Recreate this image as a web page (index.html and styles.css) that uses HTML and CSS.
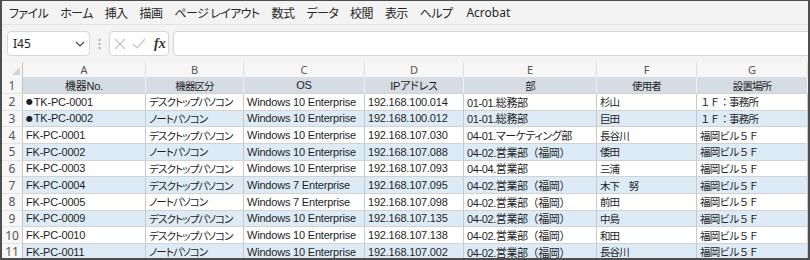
FILE: index.html
```html
<!DOCTYPE html>
<html lang="ja">
<head>
  <meta charset="UTF-8">
  <meta name="viewport" content="width=device-width, initial-scale=1.0">
  <title>機器一覧</title>
  <link rel="stylesheet" href="styles.css">
</head>
<body>
  <div class="window">
    <nav class="menu">
      <span>ファイル</span>
      <span>ホーム</span>
      <span>挿入</span>
      <span>描画</span>
      <span>ページ レイアウト</span>
      <span>数式</span>
      <span>データ</span>
      <span>校閲</span>
      <span>表示</span>
      <span>ヘルプ</span>
      <span class="latin">Acrobat</span>
    </nav>

    <div class="formula-bar">
      <div class="name-box">
        <span>I45</span>
        <svg width="10" height="6" viewBox="0 0 10 6"><path d="M1 1 L5 5 L9 1" fill="none" stroke="#444" stroke-width="1.2"/></svg>
      </div>
      <svg class="grip" width="7" height="14" viewBox="0 0 7 14">
        <circle cx="3.5" cy="3" r="1" fill="#999"/>
        <circle cx="3.5" cy="7" r="1" fill="#999"/>
        <circle cx="3.5" cy="11" r="1" fill="#999"/>
      </svg>
      <div class="fx-box">
        <svg width="12" height="12" viewBox="0 0 12 12"><path d="M1 1 L11 11 M11 1 L1 11" stroke="#c4c4c4" stroke-width="1.2"/></svg>
        <svg width="14" height="12" viewBox="0 0 14 12"><path d="M1 6 L5 10 L13 1" fill="none" stroke="#c4c4c4" stroke-width="1.2"/></svg>
        <span class="fx">fx</span>
      </div>
      <div class="formula-input"></div>
    </div>

    <div class="sheet">
      <div class="col-head">
        <div class="corner"><svg width="8" height="8" viewBox="0 0 8 8"><polygon points="8,0 8,8 0,8" fill="#d4d4d4"/></svg></div>
        <div>A</div><div>B</div><div>C</div><div>D</div><div>E</div><div>F</div><div>G</div>
      </div>

      <div class="row head">
        <div class="num">1</div>
        <div>機器No.</div><div class="jp">機器区分</div><div>OS</div><div>IPアドレス</div><div class="jp">部</div><div class="jp">使用者</div><div class="jp">設置場所</div>
      </div>
      <div class="row">
        <div class="num">2</div>
        <div><span class="dot">●</span>TK-PC-0001</div><div class="jp">デスクトップパソコン</div><div>Windows 10 Enterprise</div><div>192.168.100.014</div><div class="dept">01-01.総務部</div><div class="jp">杉山</div><div class="place">１Ｆ：事務所</div>
      </div>
      <div class="row alt">
        <div class="num">3</div>
        <div><span class="dot">●</span>TK-PC-0002</div><div class="jp">ノートパソコン</div><div>Windows 10 Enterprise</div><div>192.168.100.012</div><div class="dept">01-01.総務部</div><div class="jp">巨田</div><div class="place">１Ｆ：事務所</div>
      </div>
      <div class="row">
        <div class="num">4</div>
        <div>FK-PC-0001</div><div class="jp">デスクトップパソコン</div><div>Windows 10 Enterprise</div><div>192.168.107.030</div><div class="dept">04-01.マーケティング部</div><div class="jp">長谷川</div><div class="place">福岡ビル５Ｆ</div>
      </div>
      <div class="row alt">
        <div class="num">5</div>
        <div>FK-PC-0002</div><div class="jp">ノートパソコン</div><div>Windows 10 Enterprise</div><div>192.168.107.088</div><div class="dept">04-02.営業部<span class="fw">（福岡）</span></div><div class="jp">倭田</div><div class="place">福岡ビル５Ｆ</div>
      </div>
      <div class="row">
        <div class="num">6</div>
        <div>FK-PC-0003</div><div class="jp">デスクトップパソコン</div><div>Windows 10 Enterprise</div><div>192.168.107.093</div><div class="dept">04-04.営業部</div><div class="jp">三浦</div><div class="place">福岡ビル５Ｆ</div>
      </div>
      <div class="row alt">
        <div class="num">7</div>
        <div>FK-PC-0004</div><div class="jp">デスクトップパソコン</div><div>Windows 7 Enterprise</div><div>192.168.107.095</div><div class="dept">04-02.営業部<span class="fw">（福岡）</span></div><div class="jp">木下<span class="fw">　</span>努</div><div class="place">福岡ビル５Ｆ</div>
      </div>
      <div class="row">
        <div class="num">8</div>
        <div>FK-PC-0005</div><div class="jp">ノートパソコン</div><div>Windows 7 Enterprise</div><div>192.168.107.098</div><div class="dept">04-02.営業部<span class="fw">（福岡）</span></div><div class="jp">前田</div><div class="place">福岡ビル５Ｆ</div>
      </div>
      <div class="row alt">
        <div class="num">9</div>
        <div>FK-PC-0009</div><div class="jp">デスクトップパソコン</div><div>Windows 10 Enterprise</div><div>192.168.107.135</div><div class="dept">04-02.営業部<span class="fw">（福岡）</span></div><div class="jp">中島</div><div class="place">福岡ビル５Ｆ</div>
      </div>
      <div class="row">
        <div class="num">10</div>
        <div>FK-PC-0010</div><div class="jp">デスクトップパソコン</div><div>Windows 10 Enterprise</div><div>192.168.107.138</div><div class="dept">04-02.営業部<span class="fw">（福岡）</span></div><div class="jp">和田</div><div class="place">福岡ビル５Ｆ</div>
      </div>
      <div class="row alt">
        <div class="num">11</div>
        <div>FK-PC-0011</div><div class="jp">ノートパソコン</div><div>Windows 10 Enterprise</div><div>192.168.107.002</div><div class="dept">04-02.営業部<span class="fw">（福岡）</span></div><div class="jp">長谷川</div><div class="place">福岡ビル５Ｆ</div>
      </div>
    </div>
  </div>
</body>
</html>
```

FILE: styles.css
```css
* {
  box-sizing: border-box;
}
body {
  margin: 0;
  font-family: "Liberation Sans", "Noto Sans CJK JP", sans-serif;
}
.window {
  width: 810px;
  height: 260px;
  border: 2px solid #4d4d4d;
  border-top-width: 1px;
  background: #f3f3f3;
  overflow: hidden;
}
.menu {
  display: flex;
  align-items: center;
  gap: 12px;
  height: 24px;
  padding-left: 7px;
  border-bottom: 1px solid #e2e2e2;
  font-family: "Noto Sans CJK JP", sans-serif;
  font-size: 12px;
  letter-spacing: -0.6px;
  font-feature-settings: "palt";
  color: #262626;
}
.menu .latin {
  font-family: "Noto Sans", sans-serif;
  letter-spacing: 0;
  margin-left: 2px;
}
.formula-bar {
  display: flex;
  align-items: center;
  padding: 6px 0 6px 5px;
}
.name-box {
  display: flex;
  align-items: center;
  justify-content: space-between;
  width: 83px;
  height: 25px;
  padding: 0 4px 0 5px;
  background: #fff;
  border: 1px solid #d6d6d6;
  border-radius: 4px;
  font-family: "Noto Sans", sans-serif;
  font-size: 12px;
  color: #222;
}
.grip {
  margin: 0 6px;
}
.fx-box {
  display: flex;
  align-items: center;
  gap: 6px;
  width: 60px;
  height: 25px;
  padding-left: 4px;
  background: #fff;
  border: 1px solid #d6d6d6;
  border-radius: 4px;
}
.fx {
  font-family: "Liberation Serif", serif;
  font-style: italic;
  font-weight: bold;
  font-size: 14px;
  color: #333;
  margin-left: 2px;
}
.formula-input {
  flex: 1;
  height: 25px;
  margin-left: 4px;
  margin-right: -10px;
  background: #fff;
  border: 1px solid #d6d6d6;
  border-radius: 4px;
}
.sheet {
  background: #fff;
}
.col-head,
.row {
  display: grid;
  grid-template-columns: 21px 123px 98px 121px 99px 133px 100px 1fr;
}
.col-head {
  height: 15px;
}
.col-head > div {
  display: flex;
  align-items: center;
  justify-content: center;
  background: #f6f6f6;
  border-right: 1px solid #dedede;
  border-bottom: 1px solid #c4c4c4;
  font-family: "Noto Sans", sans-serif;
  font-size: 11px;
  color: #555;
}
.col-head > .corner {
  align-items: flex-end;
  justify-content: flex-end;
  padding: 0 2px 2px 0;
  border-right-color: #c4c4c4;
}
.row {
  height: 16.67px;
}
.row.head {
  height: 17px;
}
.row > div {
  display: flex;
  align-items: center;
  padding-left: 3px;
  white-space: nowrap;
  overflow: hidden;
  border-right: 1px solid #c5cad0;
  border-bottom: 1px solid #d2d2d2;
  font-size: 11px;
  letter-spacing: -0.2px;
  font-feature-settings: "palt";
  color: #1e1e1e;
}
.row > .jp {
  font-size: 10.5px;
  letter-spacing: -0.9px;
}
.row > .dept {
  letter-spacing: -0.4px;
}
.row > .place {
  font-size: 10.5px;
  letter-spacing: -0.8px;
  font-feature-settings: normal;
}
.fw {
  font-feature-settings: normal;
}
.row > .num {
  justify-content: center;
  padding: 0;
  background: #f6f6f6;
  border-right-color: #c4c4c4;
  border-bottom-color: #e4e4e4;
  font-family: "Noto Sans", sans-serif;
  font-size: 12px;
  letter-spacing: 0;
  color: #555;
}
.row.head > div:not(.num) {
  justify-content: center;
  padding: 0;
  background: #d6dce4;
  border-right-color: #eef0f3;
}
.row.alt > div:not(.num) {
  background: #ddebf7;
}
.dot {
  font-family: "DejaVu Sans", sans-serif;
  font-size: 8px;
  margin-right: 1px;
}
```
